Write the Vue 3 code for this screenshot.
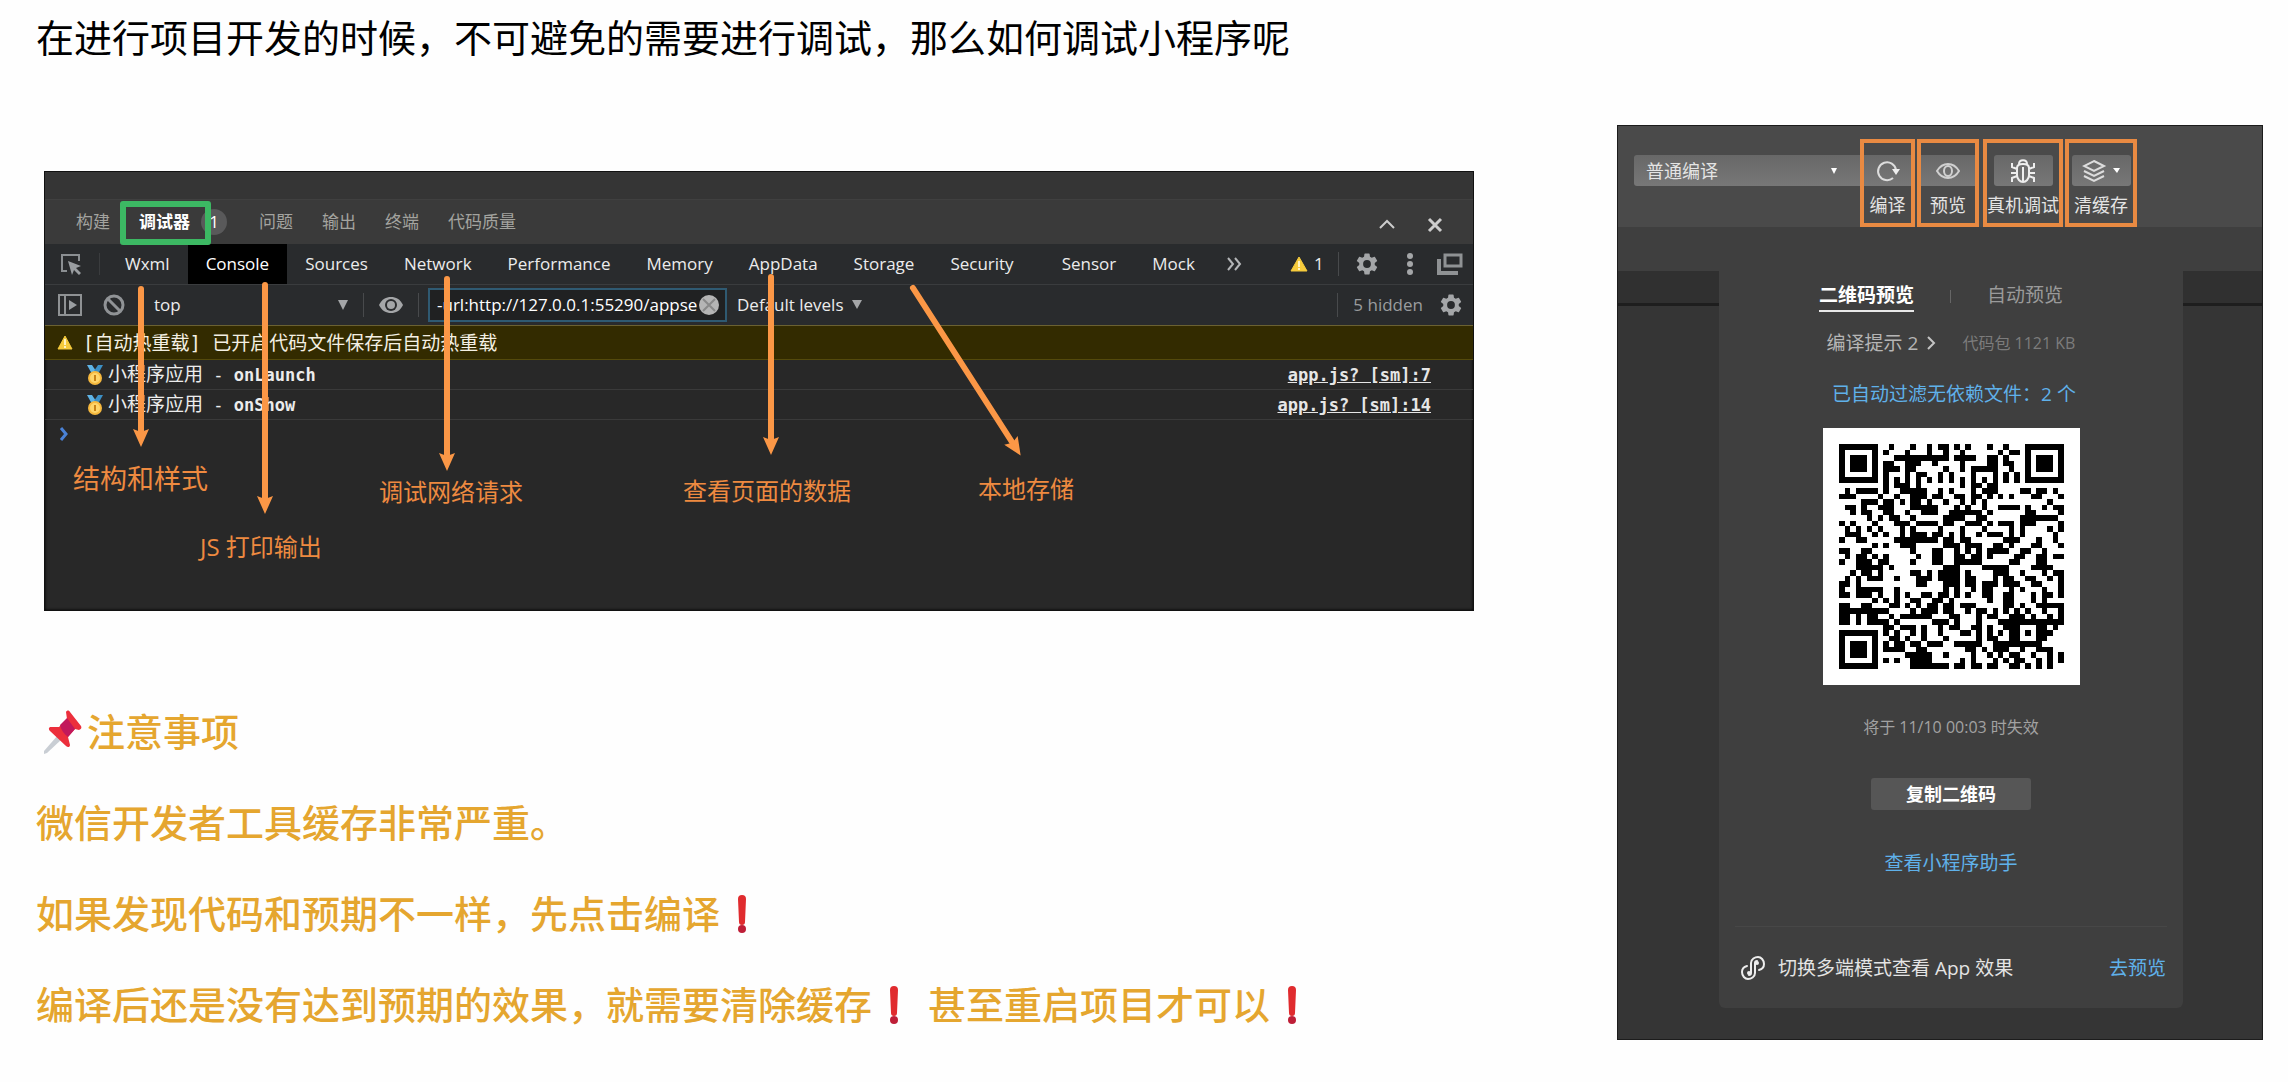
<script setup>
import { ref } from 'vue'

const filter = ref('-url:http://127.0.0.1:55290/appse')

const panelTabs = ['问题', '输出', '终端', '代码质量']
const devTabs = ['Wxml', 'Console', 'Sources', 'Network', 'Performance', 'Memory', 'AppData', 'Storage', 'Security', 'Sensor', 'Mock']

const logs = [
  { name: 'onLaunch', source: 'app.js? [sm]:7' },
  { name: 'onShow', source: 'app.js? [sm]:14' },
]

// Arrow shafts and captions, in the panel's own coordinates
const arrows = [
  [97, 118, 97, 260],
  [221, 114, 221, 327],
  [403, 108, 403, 284],
  [727, 106, 727, 268],
  [869, 117, 968, 271],
]
const captions = [
  { text: '结构和样式', x: 28, y: 289, large: true },
  { text: 'JS 打印输出', x: 155, y: 357 },
  { text: '调试网络请求', x: 334, y: 302 },
  { text: '查看页面的数据', x: 638, y: 301 },
  { text: '本地存储', x: 933, y: 299 },
]

// Dark modules of each row of the 41 x 41 code, as columns and column ranges
const qrRows = [
  '9 13 16 18-19 21 23 27 30',
  '8 12 16 19 22 29 31-32',
  '10-19 21-24 27-28 30',
  '8-9 12-14 17 22 27-28 30-31',
  '8-10 12-13 19 22 24-28 31',
  '8 12 14-15 18 20 24 28 30 32',
  '8 10 12 14 16 18 20 22 24 26 28 30 32',
  '8 10-12 14 22 24-25 27-28',
  '1 3-6 8 11-15 18 20 24 26-28 33-34 36-37 39',
  '0-2 7 10 13-15 17-18 21-22 24-25 27 29 31 35-36 40',
  '4-6 8-9 11 13-14 16 19 22 24 26 38',
  '1-2 4 7-9 13-17 21 23 26 29-32 34 37 39-40',
  '2 4-5 8-9 12 15-17 20-25 27 34-35 40',
  '5 7 9-10 13 19-22 25-26 33-39',
  '0 2 6 10-12 14-17 19-20 23-25 27 29-31 33-35 40',
  '1 3 5 7 11 13 18 22 26 31 33 38 40',
  '1-3 6 8 11 13-15 17-18 20 22 25 27-29 31 33 39',
  '0 3-4 10-17 19-20 22-23 30-32 36 39',
  '6 8 11-13 19-21 23-25 28-29 31 35-36 40',
  '0-1 4-5 13 17-18 21 23 25 27-30 33-34 37',
  '1 3-4 6 8 14 17-18 21-22 24-25 27 32-33 36-37 39-40',
  '0 3-5 7-8 13 17-18 21-25 31-32 36-37',
  '3-7 9 19-21 26-30 35-38',
  '2 4-5 7 13-14 16 18-21 23 28-30 33 37 39-40',
  '1 3 5-7 10 14-16 18-21 23-24 28 30-31 34-35 38 40',
  '0-1 3 14-15 19-21 23-24 26-28 30-32 35-36 40',
  '0 3-7 10 19 21 24 26-27 31 33 37 40',
  '0-1 3-5 7 10 12 15-16 18-19 21 23 26-27 30-31 35 37-38 40',
  '6 8 10 13-14 17-18 20 27 30-31 35 37',
  '0-1 4-5 9-10 12 14 16-17 19-20 22-24 30-31 33 36-40',
  '0-8 13 15-17 19-20 23 25-26 28 30 32 34 37 40',
  '0-1 3 5-6 9 11-16 20-21 25 27-28 31-33 35 38 40',
  '0-1 3 5-7 8 10 17-19 21 25 29-40',
  '8-9 11-13 15 18 20-21 24-25 27 30-32 36-37 39',
  '8 10 13 15 18 22-23 25 27 29 31-32 34 36-38',
  '9-10 12 15 19 25 27-28 31-32 36-37',
  '8 10-11 13-14 16-18 21-25 28-36',
  '8-11 14-15 23-24 26 28-30 33 36-38',
  '12-16 19 24 27 29 31-32 35 38 40',
  '8 10 13-16 22 24 28 30 32-33 36 38 40',
  '13-19 21-22 24-25 27-28 31-32 34 36 38',
]
const finder = (x, y) => `M${x} ${y}h7v1h-7zM${x} ${y + 6}h7v1h-7zM${x} ${y + 1}h1v5h-1zM${x + 6} ${y + 1}h1v5h-1zM${x + 2} ${y + 2}h3v3h-3z`
const qrPath = qrRows
  .flatMap((row, y) =>
    row.split(' ').map((part) => {
      const [from, to = from] = part.split('-').map(Number)
      const w = to - from + 1
      return `M${from} ${y}h${w}v1h-${w}z`
    }),
  )
  .concat([finder(0, 0), finder(34, 0), finder(0, 34)])
  .join('')

const gear =
  'M19.14 12.94c.04-.3.06-.61.06-.94s-.02-.64-.07-.94l2.03-1.58a.49.49 0 0 0 .12-.61l-1.92-3.32a.49.49 0 0 0-.59-.22l-2.39.96a7 7 0 0 0-1.62-.94L14.4 2.81a.48.48 0 0 0-.48-.41h-3.84a.47.47 0 0 0-.47.41l-.36 2.54a7.4 7.4 0 0 0-1.62.94l-2.39-.96a.48.48 0 0 0-.59.22L2.74 8.87a.47.47 0 0 0 .12.61l2.03 1.58a6 6 0 0 0 0 1.88l-2.03 1.58a.49.49 0 0 0-.12.61l1.92 3.32c.12.22.37.29.59.22l2.39-.96c.5.38 1.03.7 1.62.94l.36 2.54c.05.24.24.41.48.41h3.84c.24 0 .44-.17.47-.41l.36-2.54a7 7 0 0 0 1.62-.94l2.39.96c.22.08.47 0 .59-.22l1.92-3.32a.47.47 0 0 0-.12-.61zM12 15.6a3.6 3.6 0 1 1 0-7.2 3.6 3.6 0 0 1 0 7.2z'
</script>

<template>
  <main class="page">
    <section class="lesson">
      <h1 class="title">在进行项目开发的时候，不可避免的需要进行调试，那么如何调试小程序呢</h1>

      <div class="devtools">
        <div class="strip"></div>
        <div class="panel-tabs">
          <button class="panel-tab">构建</button>
          <button class="panel-tab current">调试器<span class="count">1</span></button>
          <button v-for="t in panelTabs" :key="t" class="panel-tab">{{ t }}</button>
          <div class="window-actions">
            <button aria-label="展开"><svg width="18" height="18" viewBox="0 0 18 18"><path d="M2 12l7-7 7 7" fill="none" stroke="#ccc" stroke-width="2" /></svg></button>
            <button aria-label="关闭"><svg width="18" height="18" viewBox="0 0 18 18"><path d="M3 3l12 12M15 3L3 15" fill="none" stroke="#ccc" stroke-width="3" /></svg></button>
          </div>
        </div>

        <nav class="dev-tabs">
          <button class="inspect" aria-label="选择元素">
            <svg width="22" height="22" viewBox="0 0 22 22"><path d="M7 18H2V2h17v6" fill="none" stroke="#8b8f92" stroke-width="2" /><path d="M8 8l13 5-5 2 5 5-2 2-5-5-2 5z" fill="#9a9ea1" /></svg>
          </button>
          <button v-for="t in devTabs" :key="t" class="dev-tab" :class="{ active: t === 'Console', spaced: t === 'Sensor' }">{{ t }}</button>
          <button class="more" aria-label="更多"><svg width="16" height="14" viewBox="0 0 16 14"><path d="M2 1l5 6-5 6M9 1l5 6-5 6" fill="none" stroke="#b4b6b8" stroke-width="2" /></svg></button>
          <div class="dev-status">
            <svg width="18" height="16" viewBox="0 0 18 16"><path d="M9 1l8 14H1z" fill="#f6cb3c" stroke="#f6cb3c" stroke-linejoin="round" /><path d="M9 5v6M9 12v2" stroke="#fff3c0" stroke-width="2" /></svg>
            <span class="warn-count">1</span>
            <i class="rule"></i>
            <svg class="gear" width="26" height="26" viewBox="0 0 24 24"><path :d="gear" fill="#a4a6a8" /></svg>
            <svg class="dots" width="6" height="22" viewBox="0 0 6 22"><g fill="#a4a6a8"><circle cx="3" cy="3" r="3" /><circle cx="3" cy="11" r="3" /><circle cx="3" cy="19" r="3" /></g></svg>
            <svg width="26" height="24" viewBox="0 0 26 24"><path d="M8 3h16v11H8z" fill="none" stroke="#8f9294" stroke-width="3" /><path d="M2 7v14h19" fill="none" stroke="#8f9294" stroke-width="4" /></svg>
          </div>
        </nav>

        <div class="filters">
          <svg class="sidebar-icon" width="24" height="22" viewBox="0 0 24 22"><path d="M1 1h22v20H1zM7 1v20" fill="none" stroke="#8f9294" stroke-width="2" /><path d="M11 6l8 5-8 5z" fill="#9a9ea1" /></svg>
          <svg class="ban-icon" width="22" height="22" viewBox="0 0 22 22"><circle cx="11" cy="11" r="9" fill="none" stroke="#909396" stroke-width="3" /><path d="M5 5l12 12" stroke="#909396" stroke-width="3" /></svg>
          <button class="context">top<svg width="12" height="10" viewBox="0 0 12 10"><path d="M1 0h10L6 10z" fill="#a4a6a8" /></svg></button>
          <i class="rule"></i>
          <svg class="eye" width="26" height="18" viewBox="0 0 26 18"><path d="M1 9C4 3 8 1 13 1s9 2 12 8c-3 6-7 8-12 8S4 15 1 9z" fill="#a4a6a8" /><circle cx="13" cy="9" r="6" fill="#2a2c2e" /><circle cx="13" cy="9" r="4" fill="#a4a6a8" /></svg>
          <i class="rule"></i>
          <div class="filter-box">
            <input v-model="filter" aria-label="Filter" spellcheck="false" />
            <button aria-label="清除" @click="filter = ''"><svg width="22" height="22" viewBox="0 0 22 22"><circle cx="11" cy="11" r="10" fill="#b5b5b5" /><path d="M5 5l12 12M17 5L5 17" stroke="#898989" stroke-width="2" /></svg></button>
          </div>
          <button class="levels">Default levels<svg width="10" height="10" viewBox="0 0 10 10"><path d="M0 0h10L5 9z" fill="#a4a6a8" /></svg></button>
          <div class="hidden-count">
            <i class="rule"></i>
            <span>5 hidden</span>
            <svg width="26" height="26" viewBox="0 0 24 24"><path :d="gear" fill="#a4a6a8" /></svg>
          </div>
        </div>

        <div class="log warning">
          <svg width="16" height="15" viewBox="0 0 16 15"><path d="M8 1l7 13H1z" fill="#f6cb3c" stroke="#f6cb3c" stroke-linejoin="round" /><path d="M8 4v6M8 11v2" stroke="#fff3c0" stroke-width="2" /></svg>
          <span>[自动热重载] 已开启代码文件保存后自动热重载</span>
        </div>
        <div v-for="l in logs" :key="l.name" class="log">
          <svg class="medal" width="18" height="20" viewBox="0 0 18 20"><path d="M1 0h5l4 6-4 3z" fill="#5fb4e6" /><path d="M17 0h-5L8 6l4 3z" fill="#3c8fc4" /><circle cx="9" cy="13" r="7" fill="#f7b93e" /><circle cx="9" cy="13" r="5" fill="#ffd66b" /><path d="M9 10v6" stroke="#c98316" stroke-width="2" /></svg>
          <span>小程序应用<b class="dash"> - </b><b>{{ l.name }}</b></span>
          <a href="#">{{ l.source }}</a>
        </div>
        <div class="prompt"><svg width="10" height="14" viewBox="0 0 10 14"><path d="M2 1l5 6-5 6" fill="none" stroke="#4a82d6" stroke-width="3" /></svg></div>

        <svg class="arrows" width="1430" height="440" viewBox="0 0 1430 440">
          <defs>
            <marker id="head" markerWidth="18" markerHeight="16" refX="2" refY="8" orient="auto" markerUnits="userSpaceOnUse"><path d="M0 0l18 8-18 8 3-8z" fill="#fb9746" /></marker>
          </defs>
          <line v-for="(a, i) in arrows" :key="i" :x1="a[0]" :y1="a[1]" :x2="a[2]" :y2="a[3]" stroke="#fb9746" stroke-width="6" stroke-linecap="round" marker-end="url(#head)" />
        </svg>
        <span v-for="c in captions" :key="c.text" class="caption" :class="{ large: c.large }" :style="{ left: c.x + 'px', top: c.y + 'px' }">{{ c.text }}</span>
      </div>

      <div class="notes">
        <h2><svg class="pin" width="40" height="44" viewBox="0 0 40 44"><path d="M15 25l4 4L4 43l-3 1 0-3z" fill="#c9ced4" /><path d="M23 2c1-2 3-2 4 0l11 14c1 2 0 3-2 4l-4-1-7 8 2 8c0 2-2 3-4 1L7 21c-2-2-1-4 1-4l8 0 8-8z" fill="#ec2f3c" /><path d="M17 15l7-7 8 11-7 8c-4-3-7-7-8-12z" fill="#c2185b" /></svg>注意事项</h2>
        <p>微信开发者工具缓存非常严重。</p>
        <p>如果发现代码和预期不一样，先点击编译<svg class="mark" width="46" height="38" viewBox="0 0 46 38"><path d="M18 4a4 4 0 0 1 8 0l-1 23a3 3 0 0 1-6 0z" fill="#e02b2e" /><circle cx="22" cy="34" r="4" fill="#be1e37" /></svg></p>
        <p>编译后还是没有达到预期的效果，就需要清除缓存<svg class="mark" width="46" height="38" viewBox="0 0 46 38"><path d="M18 4a4 4 0 0 1 8 0l-1 23a3 3 0 0 1-6 0z" fill="#e02b2e" /><circle cx="22" cy="34" r="4" fill="#be1e37" /></svg> 甚至重启项目才可以<svg class="mark" width="46" height="38" viewBox="0 0 46 38"><path d="M18 4a4 4 0 0 1 8 0l-1 23a3 3 0 0 1-6 0z" fill="#e02b2e" /><circle cx="22" cy="34" r="4" fill="#be1e37" /></svg></p>
      </div>
    </section>

    <aside class="preview">
      <div class="toolbar">
        <div class="mode">
          <select aria-label="编译模式"><option>普通编译</option></select>
          <svg width="8" height="8" viewBox="0 0 8 8"><path d="M1 1h6L4 7z" fill="#fff" /></svg>
        </div>
        <button class="tool compile">
          <span class="face"><svg width="24" height="22" viewBox="0 0 24 22"><path d="M17 18a9 9 0 1 1 3-8" fill="none" stroke="#ddd" stroke-width="2" /><path d="M16 9h8l-4 6z" fill="#eee" /></svg></span>编译
        </button>
        <button class="tool view">
          <span class="face"><svg width="24" height="18" viewBox="0 0 24 18"><path d="M1 9c3-5 7-7 11-7s8 2 11 7c-3 5-7 7-11 7S4 14 1 9z" fill="none" stroke="#d0d0d0" stroke-width="2" /><ellipse cx="12" cy="9" rx="4" ry="5" fill="none" stroke="#d0d0d0" stroke-width="2" /></svg></span>预览
        </button>
        <button class="tool device">
          <span class="face"><svg width="26" height="26" viewBox="0 0 26 26"><g fill="none" stroke="#eee" stroke-width="2"><path d="M7 10c0-3 3-4 6-4s6 1 6 4v7c0 4-3 7-6 7s-6-3-6-7zM13 9v15M9 6c0-5 8-5 8 0M7 11L2 9V5M19 11l5-2V5M7 15H1M19 15h6M7 18l-5 2v4M19 18l5 2v4" /></g></svg></span>真机调试
        </button>
        <button class="tool cache">
          <span class="face"><svg width="38" height="24" viewBox="0 0 38 24"><g fill="none" stroke="#ddd" stroke-width="2"><path d="M12 2l10 5-10 5L2 7zM2 12l10 5 10-5M2 17l10 5 10-5" /></g><path d="M31 9h7l-3 5z" fill="#fff" /></svg></span>清缓存
        </button>
      </div>

      <div class="stage">
        <div class="card">
          <div class="code-tabs">
            <button class="on">二维码预览</button>
            <i></i>
            <button>自动预览</button>
          </div>
          <div class="hints">
            <a href="#">编译提示 2<svg width="10" height="16" viewBox="0 0 10 16"><path d="M2 2l6 6-6 6" fill="none" stroke="#c4c4c4" stroke-width="2" /></svg></a>
            <span>代码包 1121 KB</span>
          </div>
          <a class="link filtered" href="#">已自动过滤无依赖文件：2 个</a>
          <svg class="qr" viewBox="-3 -3 47 47" role="img" aria-label="预览二维码"><path d="M-3-3h47v47H-3z" fill="#fff" /><path :d="qrPath" shape-rendering="crispEdges" /></svg>
          <p class="expiry">将于 11/10 00:03 时失效</p>
          <button class="copy">复制二维码</button>
          <a class="link helper" href="#">查看小程序助手</a>
          <div class="multi">
            <svg width="24" height="24" viewBox="0 0 24 24"><g fill="none" stroke="#ededed" stroke-width="2" stroke-linecap="round"><path d="M6 10c-4 1-5 4-5 6 0 4 3 7 6 7s7-2 7-6V7c0-1 1-2 2-2" /><path d="M18 14c4-1 5-4 5-6 0-4-3-7-6-7s-7 2-7 6v10c0 1-1 2-2 2" /></g><circle cx="8" cy="17" r="2" fill="#ededed" /><circle cx="16" cy="7" r="2" fill="#ededed" /></svg>
            <span>切换多端模式查看 App 效果</span>
            <a class="link" href="#">去预览</a>
          </div>
        </div>
      </div>
    </aside>
  </main>
</template>

<style>
body {
  margin: 0;
  background: #fefefe;
}
</style>

<style scoped>
.page {
  display: flex;
  gap: 143px;
  align-items: flex-start;
  padding: 0 25px 0 36px;
  font-family: 'Open Sans', 'Noto Sans CJK SC', sans-serif;
}
button,
input,
select {
  font: inherit;
  color: inherit;
  background: none;
  border: 0;
  padding: 0;
  margin: 0;
}
svg {
  display: block;
  flex: none;
}
a {
  text-decoration: none;
}
.lesson {
  flex: 1;
  min-width: 0;
}
.title {
  margin: 11px 0 108px;
  font-size: 38px;
  line-height: 52px;
  font-weight: 400;
  color: #000;
}

/* Debugger panel */
.devtools {
  position: relative;
  margin-left: 8px;
  min-height: 440px;
  background: #282828;
  box-sizing: border-box;
  border: 1px solid #111;
  box-shadow: inset 0 0 3px #000;
  color: #ececec;
  font-size: 17px;
  line-height: 24px;
}
.strip {
  height: 27px;
  background: #353535;
  border-bottom: 1px solid #404040;
}
.panel-tabs {
  display: flex;
  align-items: center;
  gap: 29px;
  height: 44px;
  padding: 0 20px 0 31px;
  background: #3a3a3a;
  color: #a3a39f;
}
.panel-tab.current {
  position: relative;
  margin-right: 40px;
  color: #fff;
  font-weight: 700;
}
.panel-tab.current::before {
  content: '';
  position: absolute;
  z-index: 1;
  inset: -9px -21px -11px -19px;
  border: 6px solid #3cb863;
  border-radius: 3px;
}
.count {
  position: absolute;
  left: 62px;
  top: -1px;
  width: 26px;
  height: 26px;
  border-radius: 13px;
  background: #59595a;
  line-height: 26px;
  text-align: center;
  font-weight: 400;
}
.window-actions {
  display: flex;
  gap: 30px;
  margin: 6px 9px 0 auto;
}
.dev-tabs {
  display: flex;
  align-items: center;
  height: 40px;
  background: #292b2d;
  border-bottom: 1px solid #3a3c3e;
}
.inspect {
  padding: 0 17px 0 15px;
  margin-right: 7px;
  border-right: 1px solid #3a3c3e;
}
.dev-tab {
  height: 40px;
  padding: 0 18px;
}
.dev-tab.active {
  background: #000;
  color: #fff;
}
.dev-tab.spaced {
  margin-left: 12px;
}
.more {
  margin-left: 13px;
}
.dev-status {
  display: flex;
  align-items: center;
  margin-left: auto;
  padding-right: 10px;
}
.warn-count {
  width: 22px;
  padding-left: 6px;
  box-sizing: border-box;
}
.rule {
  width: 1px;
  height: 24px;
  background: #484a4c;
}
.dev-status .rule {
  margin: 0 15px 0 8px;
}
.dots {
  margin: 0 24px 0 27px;
}
.filters {
  display: flex;
  align-items: center;
  height: 40px;
  background: #292b2d;
  border-bottom: 1px solid #6a6132;
}
.sidebar-icon {
  margin-left: 13px;
}
.ban-icon {
  margin: 0 29px 0 21px;
}
.context {
  display: flex;
  align-items: center;
  justify-content: space-between;
  width: 195px;
  margin-right: 14px;
}
.eye {
  margin: 0 14px;
}
.filter-box {
  display: flex;
  align-items: center;
  width: 299px;
  height: 34px;
  box-sizing: border-box;
  margin: 0 10px 0 9px;
  padding: 0 5px 0 7px;
  border: 2px solid #2f5a72;
  background: #202122;
}
.filter-box input {
  flex: 1;
  min-width: 0;
  outline: 0;
  color: #fff;
}
.levels {
  display: flex;
  align-items: center;
  gap: 8px;
}
.hidden-count {
  display: flex;
  align-items: center;
  gap: 15px;
  margin-left: auto;
  padding-right: 9px;
  color: #9a9c9e;
}
.log {
  display: flex;
  align-items: center;
  gap: 4px;
  height: 29px;
  padding: 0 42px 0 41px;
  border-bottom: 1px solid #3a3a3a;
  font-family: 'DejaVu Sans Mono', 'Noto Sans CJK SC', monospace;
  font-size: 19px;
  white-space: pre;
}
.log b,
.log a {
  font-size: 17px;
}
.log .dash {
  font-weight: 400;
}
.log a {
  margin-left: auto;
  color: #e6e6e6;
  font-weight: 700;
  text-decoration: underline;
}
.warning {
  gap: 10px;
  height: 33px;
  padding-left: 12px;
  background: #332b00;
  border-color: #544a0c;
  color: #f4f0e4;
}
.prompt {
  padding: 7px 14px;
}
.arrows {
  position: absolute;
  left: -1px;
  top: -1px;
}
.caption {
  position: absolute;
  font-size: 24px;
  line-height: 36px;
  color: #ee8a40;
  white-space: nowrap;
}
.caption.large {
  font-size: 27px;
}

/* Notes */
.notes {
  margin-top: 75px;
  color: #e5a62f;
  font-size: 38px;
  line-height: 91px;
  font-weight: 500;
}
.notes h2,
.notes p {
  margin: 0;
  font: inherit;
}
.notes h2 {
  display: flex;
  align-items: center;
}
.pin {
  margin: 0 4px 0 7px;
}
.mark {
  display: inline-block;
  vertical-align: -5px;
}

/* Preview window */
.preview {
  width: 646px;
  flex: none;
  box-sizing: border-box;
  margin-top: 125px;
  border: 1px solid #1c1c1c;
  background: #353535;
  color: #e4e4e4;
  font-size: 18px;
  line-height: 26px;
}
.toolbar {
  display: flex;
  align-items: flex-start;
  gap: 2px;
  box-sizing: border-box;
  height: 101px;
  padding: 13px 0 0 16px;
  background: #4a4a4a;
}
.mode {
  position: relative;
  flex: none;
  width: 226px;
  margin: 16px -2px 0 0;
}
.mode select {
  appearance: none;
  width: 100%;
  height: 31px;
  padding-left: 12px;
  border-radius: 3px 0 0 3px;
  background: linear-gradient(#686868, #777);
}
.mode svg {
  position: absolute;
  right: 22px;
  top: 12px;
}
.tool {
  display: flex;
  flex-direction: column;
  align-items: center;
  height: 88px;
  box-sizing: border-box;
  padding-top: 12px;
  border: 4px solid #e98a42;
  white-space: nowrap;
}
.face {
  display: flex;
  align-items: center;
  justify-content: center;
  width: 100%;
  height: 31px;
  margin-bottom: 6px;
  background: linear-gradient(#686868, #777);
}
.compile {
  width: 55px;
}
.view {
  width: 62px;
  margin-right: 2px;
}
.device {
  width: 80px;
}
.cache {
  width: 72px;
}
.device .face,
.cache .face {
  width: 59px;
  border-radius: 3px;
}
.stage {
  padding: 0 79px 31px 101px;
  background: linear-gradient(#3f3f3f 0 44px, #303030 44px 76px, #1e1e1e 76px 79px, #353535 79px);
}
.card {
  display: flex;
  flex-direction: column;
  align-items: center;
  background: #3f3f3f;
  border-radius: 0 0 6px 6px;
  font-size: 19px;
}
.code-tabs {
  display: flex;
  align-items: center;
  gap: 36px;
  padding-top: 53px;
  margin-right: 20px;
  color: #9a9a9a;
}
.code-tabs button {
  height: 32px;
  border-bottom: 2px solid transparent;
}
.code-tabs .on {
  color: #fff;
  font-weight: 700;
  border-color: #e8e8e8;
}
.code-tabs i {
  width: 1px;
  height: 13px;
  background: #666;
}
.hints {
  display: flex;
  align-items: center;
  gap: 26px;
  margin-top: 18px;
}
.hints a {
  display: flex;
  align-items: center;
  gap: 8px;
  color: #b5b5b5;
}
.hints span,
.expiry {
  font-size: 16px;
}
.hints span {
  color: #7c7c7c;
}
.link {
  color: #5fb1ea;
}
.filtered {
  margin: 25px 0 21px 6px;
}
.qr {
  width: 257px;
}
.expiry {
  margin: 29px 0 38px;
  color: #a2a2a2;
}
.copy {
  width: 160px;
  height: 32px;
  border-radius: 3px;
  background: #565656;
  color: #fff;
  font-size: 18px;
  font-weight: 700;
}
.helper {
  margin: 40px 0 50px;
}
.multi {
  display: flex;
  align-items: center;
  align-self: stretch;
  gap: 13px;
  margin: 0 16px;
  padding: 28px 1px 27px 6px;
  border-top: 1px solid #474747;
}
.multi .link {
  margin-left: auto;
}
</style>
